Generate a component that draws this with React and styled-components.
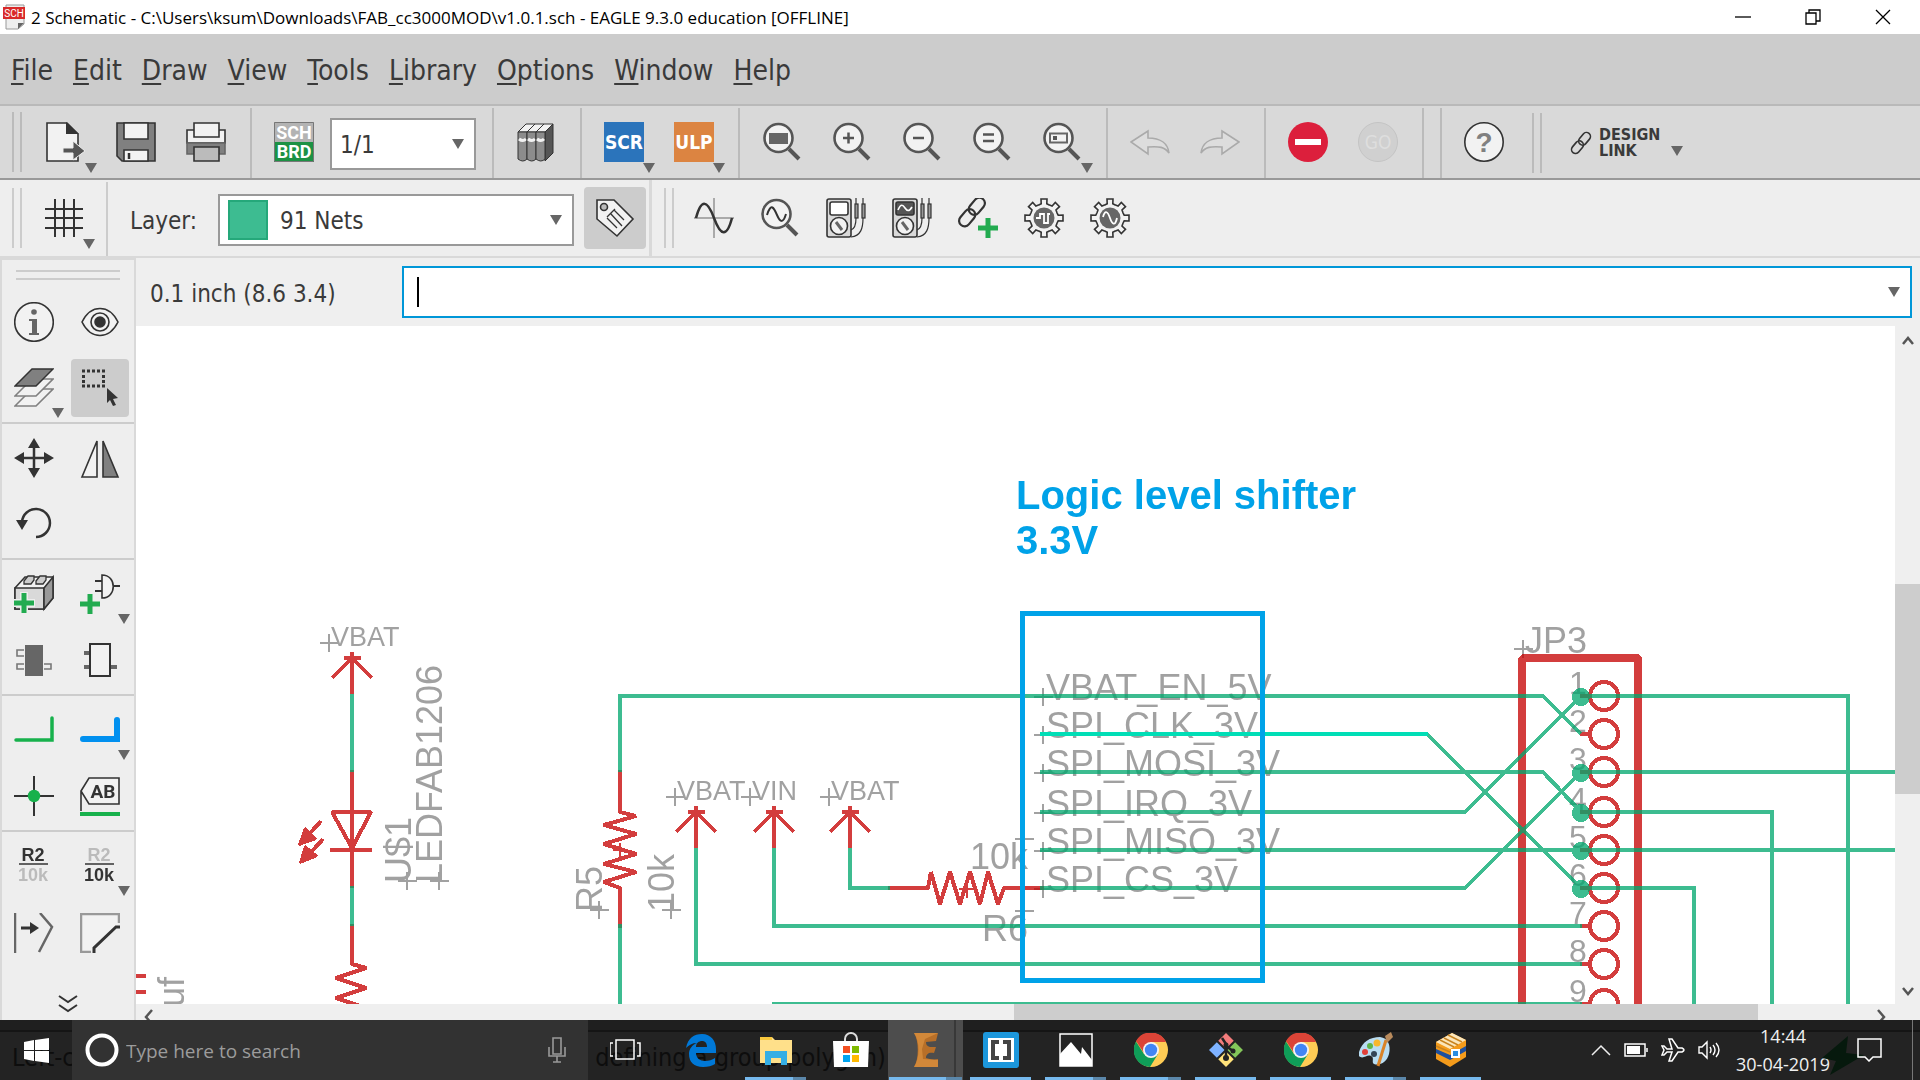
import React from 'react'
import styled, { createGlobalStyle } from 'styled-components'

const GlobalStyle = createGlobalStyle`
  * { box-sizing: border-box; }
  body {
    margin: 0;
    overflow: hidden;
    font-family: "DejaVu Sans Condensed", "DejaVu Sans", sans-serif;
    font-size: 24px;
    color: #3a3a3a;
  }
  button, input, select { font: inherit; color: inherit; }
  svg { display: block; }
`

const Window = styled.div`
  display: flex;
  flex-direction: column;
  height: 100vh;
  background: #eee;
`

const TitleBar = styled.header`
  display: flex;
  align-items: center;
  height: 34px;
  flex: none;
  padding: 0 2px 0 3px;
  background: #fff;
`

const Title = styled.h1`
  flex: 1;
  margin: 0 0 0 6px;
  font: 400 17px "Open Sans", sans-serif;
  color: #000;
  white-space: nowrap;
`

const WindowButton = styled.button`
  display: flex;
  align-items: center;
  justify-content: center;
  width: 70px;
  height: 34px;
  padding: 0;
  border: 0;
  background: none;
`

const MenuBar = styled.nav`
  display: flex;
  align-items: center;
  gap: 20px;
  height: 72px;
  flex: none;
  padding: 2px 11px 0;
  background: #ccc;
  border-bottom: 2px solid #b9b9b9;
`

const MenuItem = styled.button`
  padding: 0;
  border: 0;
  background: none;
  font-size: 28px;

  &::first-letter {
    text-decoration: underline;
    text-decoration-thickness: 2px;
    text-underline-offset: 3px;
  }
`

const MainBar = styled.div`
  display: flex;
  height: 74px;
  flex: none;
  background: #d9d9d9;
  border-bottom: 2px solid #999;
`

const SubBar = styled.div`
  display: flex;
  height: 78px;
  flex: none;
  background: #eee;
  border-bottom: 2px solid #d9d9d9;
`

const Group = styled.div`
  display: flex;
  align-items: center;
  gap: ${(props) => props.$gap || 10}px;
  margin-top: 2px;
  padding: 0 ${(props) => props.$end || 14}px 2px 12px;
  border-right: 2px solid ${(props) => props.$line || '#bbb'};
`

const Spacer = styled.div`
  width: 18px;
  margin-top: 2px;
  border-right: 2px solid #bbb;
`

const Grip = styled.div`
  width: 10px;
  height: 60px;
  margin-right: 4px;
  border: solid ${(props) => props.$line || '#bbb'};
  border-width: 0 2px;
`

const Tool = styled.button`
  position: relative;
  display: flex;
  align-items: center;
  justify-content: center;
  width: ${(props) => props.$size || 60}px;
  height: ${(props) => props.$size || 60}px;
  padding: 0;
  border: 0;
  border-radius: 4px;
  background: ${(props) => (props.$active ? '#ccc' : 'none')};
`

const Caret = styled.span`
  width: 0;
  height: 0;
  flex: none;
  border: solid transparent;
  border-width: 10px 6px 0;
  border-top-color: #666;
`

const ToolCaret = styled(Caret)`
  position: absolute;
  right: -1px;
  bottom: -1px;
`

const SelectBox = styled.div`
  display: flex;
  align-items: center;
  width: ${(props) => props.$width}px;
  height: 52px;
  margin-top: 4px;
  padding: 0 10px 0 8px;
  background: #fff;
  border: 2px solid #999;

  select {
    flex: 1;
    height: 100%;
    padding: 2px 0 0;
    border: 0;
    outline: 0;
    appearance: none;
    background: none;
  }
`

const Swatch = styled.span`
  width: 40px;
  height: 40px;
  margin-right: 12px;
  background: #3dbc91;
  border: 2px solid #25a87a;
`

const LayerGroup = styled.div`
  display: flex;
  align-items: center;
  padding: 0 3px 0 22px;
  border-right: 3px solid #d9d9d9;

  label {
    width: 88px;
    padding-top: 6px;
  }
  button { margin-left: 10px; }
`

const LinkGroup = styled.div`
  display: flex;
  align-items: center;
  gap: 24px;
  margin: 2px 0 0 2px;
`

const DesignLink = styled.button`
  display: flex;
  align-items: center;
  gap: 7px;
  padding: 0;
  border: 0;
  background: none;
  font: 700 16px/16px "DejaVu Sans Condensed", sans-serif;
  text-align: left;

  span:last-child { margin: 16px 0 0 4px; }
`

const Body = styled.div`
  display: flex;
  flex: 1;
  min-height: 0;
`

const Palette = styled.aside`
  width: 136px;
  flex: none;
  border: 2px solid #d9d9d9;
  border-bottom: 0;
  overflow: hidden;
`

const PaletteGrip = styled.div`
  height: 10px;
  margin: 10px 14px 8px;
  border: solid #ccc;
  border-width: 2px 0;
`

const PaletteGroup = styled.div`
  display: grid;
  grid-template-columns: 58px 58px;
  gap: 8px;
  height: 136px;
  padding: 5px 3px;
  border-bottom: 2px solid #ccc;

  &:last-of-type { border-bottom: 0; }
`

const MoreButton = styled.button`
  display: block;
  margin: 27px auto 0;
  padding: 0;
  border: 0;
  background: none;
`

const Editor = styled.main`
  display: grid;
  grid-template-columns: 1fr 25px;
  grid-template-rows: 68px 1fr 16px;
  flex: 1;
  min-width: 0;
`

const CommandRow = styled.div`
  grid-column: 1 / 3;
  display: flex;
  align-items: center;
  padding: 0 8px 0 14px;
  background: #efefef;
`

const Coords = styled.output`
  width: 252px;
  padding-top: 3px;
`

const CommandBox = styled.div`
  display: flex;
  align-items: center;
  flex: 1;
  height: 52px;
  padding: 0 10px 0 13px;
  background: #fff;
  border: 2px solid #0097d8;

  input {
    flex: 1;
    border: 0;
    outline: 0;
    background: none;
  }
`

const TextCursor = styled.span`
  width: 2px;
  height: 30px;
  background: #000;
`

const Sheet = styled.div`
  min-height: 0;
  overflow: hidden;
  background: #fff;

  svg { width: 100%; height: 100%; }
`

const VScroll = styled.div`
  display: grid;
  grid-template-rows: 258fr 210fr 210fr;
  justify-items: center;
  background: #efefef;
`

const HScroll = styled.div`
  grid-column: 1 / 3;
  display: grid;
  grid-template-columns: 878fr 744fr 162fr;
  background: #efefef;
`

const ScrollCell = styled.div`
  display: flex;
  flex-direction: ${(props) => (props.$row ? 'row' : 'column')};
  justify-content: ${(props) => (props.$end ? 'flex-end' : 'flex-start')};
  padding: ${(props) => (props.$row ? '5px 32px 0 7px' : '8px 0 6px')};
  overflow: hidden;
`

const Thumb = styled.div`
  width: 100%;
  background: #cdcdcd;
`

const Taskbar = styled.footer`
  position: relative;
  display: flex;
  height: 60px;
  flex: none;
  background: linear-gradient(#1f1f1f 10px, #151515 10px, #151515 12px, #232323 12px);
  font-family: "Open Sans", sans-serif;
`

const StatusText = styled.span`
  position: absolute;
  left: 12px;
  top: 24px;
  font: 25px/28px "DejaVu Sans Condensed", "DejaVu Sans", sans-serif;
  color: #0d0d0d;
  white-space: nowrap;
`

const StartButton = styled.button`
  position: relative;
  width: 72px;
  padding: 0 0 0 24px;
  border: 0;
  background: none;
`

const Search = styled.label`
  position: relative;
  display: flex;
  align-items: center;
  width: 516px;
  padding: 0 22px 0 13px;
  background: #323232;

  input {
    flex: 1;
    margin: 0 0 0 7px;
    padding: 2px 0 0;
    border: 0;
    outline: 0;
    background: none;
    font-size: 19px;
  }
  input::placeholder { color: #9c9c9c; opacity: 1; }
`

const Task = styled.button`
  position: relative;
  display: grid;
  grid-template-rows: 1fr 3px;
  justify-items: center;
  align-items: center;
  width: 75px;
  padding: 0;
  border: 0;
  background: ${(props) => (props.$active ? 'linear-gradient(90deg, #4d4d4d 66px, #383838 66px, #383838 68px, #4d4d4d 68px)' : 'none')};

  svg { margin-top: 3px; }
`

const Running = styled.span`
  width: ${(props) => (props.$wide ? 73 : 61)}px;
  height: 3px;
  background: ${(props) => (props.$many ? 'linear-gradient(90deg, #76b9ed 78%, #5b87aa 78%)' : '#76b9ed')};
`

const Tray = styled.div`
  position: relative;
  display: flex;
  align-items: center;
  gap: 13px;
  margin-left: auto;
  padding-right: 9px;
  border-right: 1px solid #777;
`

const Clock = styled.time`
  width: 98px;
  margin: 0 12px 0 0;
  font-size: 18px;
  line-height: 28px;
  color: #f0f0f0;
  text-align: center;
  white-space: nowrap;
`

const Bolt = styled.svg`
  position: absolute;
  right: 46px;
  top: 16px;
`

const ActionCenter = styled.svg`
  position: relative;
`

const Edge = styled.div`
  width: 7px;
`

const Icon = ({ children, size = 40 }) => (
  <svg width={size} height={size} viewBox="0 0 40 40" fill="none" stroke="#333" strokeWidth="1.6">{children}</svg>
)

const Lens = ({ children }) => (
  <Icon>
    <path d="M27 27l10 10" stroke="#555" strokeWidth="4" />
    <circle cx="16.500" cy="16" r="14" fill="#f2f2f2" stroke="#555" strokeWidth="2.600" />
    {children}
  </Icon>
)

const gearPath = () => {
  const pts = []
  for (let i = 0; i < 8; i++) {
    [[-22, 14], [-11, 14.5], [-9, 19.2], [9, 19.2], [11, 14.5], [22, 14]].forEach(([a, r]) => {
      const t = ((i * 45 + a) * Math.PI) / 180
      pts.push(`${(20 + r * Math.cos(t)).toFixed(1)},${(20 + r * Math.sin(t)).toFixed(1)}`)
    })
  }
  return pts.join(' ')
}

const Gear = ({ wave }) => (
  <Icon>
    <polygon points={gearPath()} fill="#f2f2f2" />
    <circle cx="20" cy="20" r="10.500" fill="#666" stroke="none" />
    <path d={wave} stroke="#fff" strokeWidth="1.800" />
  </Icon>
)

const Meter = ({ scope }) => (
  <Icon>
    <rect x="1" y="1" width="24" height="38" rx="2" fill="#d9d9d9" />
    <rect x="4" y="4" width="18" height="13" rx="2" fill={scope ? '#555' : '#fff'} />
    {scope && <path d="M6 12c3-7 5-5 7-2s4 4 7-1" stroke="#fff" />}
    <circle cx="13" cy="28" r="8.500" fill="#f2f2f2" />
    <path d="M10 24l6 8" strokeWidth="3" stroke="#666" />
    <path d="M30 0v7M37 0v7M30 20c0 7-2 11-5 12M37 20c0 10-2 18-12 19" strokeWidth="1.200" />
    <rect x="29" y="6" width="3" height="14" fill="#999" strokeWidth="1.200" />
    <rect x="36" y="6" width="3" height="14" fill="#999" strokeWidth="1.200" />
  </Icon>
)

const Plus = ({ x, y }) => (
  <path d={`M${x - 10} ${y}h20M${x} ${y - 10}v20`} stroke="#22ab50" strokeWidth="5" />
)

const chain = (
  <g transform="rotate(-50 14 14)" strokeWidth="2.200">
    <rect x="-3" y="8.500" width="19" height="11" rx="5.500" />
    <rect x="12" y="8.500" width="19" height="11" rx="5.500" />
  </g>
)

const icons = {
  open: (
    <Icon>
      <path d="M1 1h20l11 11v27H1z" fill="#f2f2f2" />
      <path d="M20 0l13 12H20z" fill="#333" stroke="none" />
      <path d="M17 26h10v-7l12 10-12 9v-7H17z" fill="#555" stroke="#eee" strokeWidth="1" />
    </Icon>
  ),
  save: (
    <Icon>
      <path d="M1 1h38v38H6l-5-5z" fill="#808080" />
      <path d="M8 1h24v16H8zM8 39V28h24v11z" fill="#f2f2f2" />
      <path d="M13 31v6" strokeWidth="2.500" />
    </Icon>
  ),
  print: (
    <Icon>
      <path d="M1 8h38v13H1z" fill="#f2f2f2" />
      <path d="M1 21h38v11H1z" fill="#808080" stroke="#666" />
      <path d="M8 1h25v14H8z" fill="#f2f2f2" />
      <path d="M8 25h25v14H8z" fill="#bbb" />
    </Icon>
  ),
  board: (
    <Icon>
      <path d="M0 0h40v20H0z" fill="#b3b3b3" stroke="none" />
      <path d="M0 20h40v20H0z" fill="#1c9144" stroke="none" />
      <path d="M.5 .5h39v39H.5z" stroke="#777" strokeWidth="1" />
      <g fill="#fff" stroke="none" fontSize="18" fontWeight="700" textAnchor="middle" fontFamily="Roboto">
        <text x="20" y="17">SCH</text>
        <text x="20" y="36">BRD</text>
      </g>
    </Icon>
  ),
  books: (
    <Icon>
      <path d="M29 10l8-8v29l-8 8z" fill="#555" strokeWidth="1" />
      {[2, 11, 20].map((x) => (
        <g key={x} strokeWidth="1">
          <path d={`M${x} 10l8-8h9l-8 8z`} fill="#f2f2f2" />
          <path d={`M${x} 10h9v27q-4 4-9 0z`} fill="#8c8c8c" />
          <path d={`M${x + 1} 17q4 3 7 0`} stroke="#f2f2f2" strokeWidth="3" />
        </g>
      ))}
    </Icon>
  ),
  scr: (
    <Icon>
      <path d="M0 0h40v40H0z" fill="#2b74bb" stroke="none" />
      <text x="20" y="27" fill="#fff" stroke="none" fontSize="19" fontWeight="700" textAnchor="middle" fontFamily="DejaVu Sans Condensed">SCR</text>
    </Icon>
  ),
  ulp: (
    <Icon>
      <path d="M0 0h40v40H0z" fill="#dc8441" stroke="none" />
      <text x="20" y="27" fill="#fff" stroke="none" fontSize="19" fontWeight="700" textAnchor="middle" fontFamily="DejaVu Sans Condensed">ULP</text>
    </Icon>
  ),
  zoomFit: <Lens><path d="M7 11h19v11H7z" fill="#666" stroke="none" /></Lens>,
  zoomIn: <Lens><path d="M11 16h11M16.500 10.500v11" stroke="#555" strokeWidth="2.500" /></Lens>,
  zoomOut: <Lens><path d="M11 16h11" stroke="#555" strokeWidth="2.500" /></Lens>,
  zoomRedraw: <Lens><path d="M11 12.500h11M11 19h11" stroke="#555" strokeWidth="2.500" /></Lens>,
  zoomSelect: (
    <Lens>
      <path d="M8 11.500h17v9H8z" stroke="#666" strokeWidth="2" />
      <path d="M11 14h4v4h-4z" fill="#555" stroke="none" />
    </Lens>
  ),
  undo: <Icon><path d="M1 20L18 9v7c13 0 20 6 21 15c-4-6-10-7-21-6v7z" fill="#ddd" stroke="#aaa" /></Icon>,
  redo: <Icon><path d="M39 20L22 9v7C9 16 2 22 1 31c4-6 10-7 21-6v7z" fill="#ddd" stroke="#aaa" /></Icon>,
  stop: (
    <Icon>
      <circle cx="20" cy="20" r="20" fill="#dc1f3c" stroke="none" />
      <path d="M7 17h26v6H7z" fill="#fff" stroke="none" />
    </Icon>
  ),
  go: (
    <Icon>
      <circle cx="20" cy="20" r="19.500" fill="#d0d0d0" stroke="#c4c4c4" strokeWidth="1" />
      <text x="20" y="27" fill="#dedede" stroke="none" fontSize="19" textAnchor="middle" fontFamily="DejaVu Sans Condensed">GO</text>
    </Icon>
  ),
  help: (
    <Icon>
      <circle cx="20" cy="20" r="19.200" fill="#f2f2f2" />
      <text x="20" y="30" fill="#808080" stroke="none" fontSize="28" fontWeight="700" textAnchor="middle" fontFamily="Liberation Sans">?</text>
    </Icon>
  ),
  grid: <Icon><path d="M1 11h38M1 20h38M1 30h38M11 1v38M20 1v38M30 1v38" strokeWidth="2" /></Icon>,
  tag: (
    <Icon>
      <path d="M2 2h17l19 19-16 17L2 21z" fill="#f2f2f2" />
      <circle cx="9" cy="9" r="3.500" fill="#bbb" />
      <path d="M12 19l8-8M19 12l10 10M16 16l11 12M12 20l10 10" strokeWidth="1.300" />
    </Icon>
  ),
  sine: (
    <Icon>
      <path d="M0 20h40M20 0v40" stroke="#aaa" strokeWidth="2" />
      <path d="M2 20c5-19 11-19 18 0s13 19 18 0" strokeWidth="2.500" />
    </Icon>
  ),
  probe: <Lens><path d="M7 17c4-13 7-7 10 0s6 9 9-1" strokeWidth="2" /></Lens>,
  meter: <Meter />,
  scope: <Meter scope />,
  link: <Icon>{chain}<Plus x={30} y={30} /></Icon>,
  gearDigital: <Gear wave="M12 20h4v-4h4v9h4v-9h2" />,
  gearSine: <Gear wave="M13 19c2-8 5-5 7 1s5 9 7 0" />,
  info: (
    <Icon>
      <circle cx="20" cy="20" r="19.300" fill="#f2f2f2" />
      <circle cx="20" cy="10" r="2.800" fill="#666" stroke="none" />
      <path d="M15 17h8v14h2v2H15v-2h3V19h-3z" fill="#666" stroke="none" />
    </Icon>
  ),
  eye: (
    <Icon>
      <path d="M2 20C11 2 29 2 38 20C29 38 11 38 2 20z" fill="#f2f2f2" />
      <circle cx="20" cy="20" r="9" />
      <circle cx="20" cy="20" r="5" fill="#333" />
    </Icon>
  ),
  layers: (
    <Icon>
      <path d="M1 38l17-17h21L22 38z" fill="#f2f2f2" stroke="#808080" />
      <path d="M1 28l17-17h21L22 28z" fill="#f2f2f2" stroke="#808080" />
      <path d="M1 18L18 1h21L22 18z" fill="#808080" strokeWidth="1.500" />
    </Icon>
  ),
  group: (
    <Icon>
      <path d="M2 3h23M2 18h23" strokeDasharray="3 2" strokeWidth="3" />
      <path d="M3.500 7v9M23.500 7v9" strokeDasharray="3 2" strokeWidth="3" />
      <path d="M27 20l11 10-5 1 3 6-3 1-3-6-3 3z" fill="#333" stroke="none" />
    </Icon>
  ),
  move: (
    <Icon>
      <path d="M8 20h24M20 8v24" strokeWidth="2.500" />
      <path d="M20 0l6 10H14zM20 40l6-10H14zM0 20l10-6v12zM40 20l-10-6v12z" fill="#333" stroke="none" />
    </Icon>
  ),
  mirror: (
    <Icon>
      <path d="M17 3v36H2z" fill="#f2f2f2" />
      <path d="M23 3v36h15z" fill="#808080" />
    </Icon>
  ),
  rotate: (
    <Icon>
      <path d="M8 18a14 14 0 1 1 14 15" strokeWidth="2.500" />
      <path d="M2 16h12l-6 10z" fill="#333" stroke="none" />
    </Icon>
  ),
  part: (
    <Icon>
      <path d="M1 14L11 3h28v21L30 35H1z" fill="#f2f2f2" />
      <path d="M1 14h29v21H1z" fill="#d9d9d9" />
      <path d="M30 14l9-11v21l-9 11z" fill="#999" />
      <path d="M10 7l4-5h6v4l-3 4h-7zM22 7l4-5h6v4l-3 4h-7z" fill="#ccc" strokeWidth="1.300" />
      <path d="M-1 29h22M10 18v22" stroke="#eee" strokeWidth="8" />
      <Plus x={10} y={29} />
    </Icon>
  ),
  gate: (
    <Icon>
      <path d="M15 7h7M15 17h7M34 12h6" strokeWidth="2" />
      <path d="M22 1v23c15 0 15-23 0-23z" fill="#f2f2f2" />
      <Plus x={10} y={30} />
    </Icon>
  ),
  chipFill: (
    <Icon>
      <path d="M10 10H3v6h7M10 24H3v5h7M30 24h7v5h-7" stroke="#777" />
      <path d="M11 5h18v31H11z" fill="#666" stroke="none" />
    </Icon>
  ),
  chip: (
    <Icon>
      <path d="M4 13h6M4 27h6M30 27h7" stroke="#666" strokeWidth="4" />
      <path d="M10 4h20v32H10z" fill="#f2f2f2" strokeWidth="2" />
    </Icon>
  ),
  net: <Icon><path d="M2 30h36V8" stroke="#17b14c" strokeWidth="3.500" strokeLinecap="round" /></Icon>,
  bus: <Icon><path d="M3 29h34V10" stroke="#0190ef" strokeWidth="6" strokeLinecap="round" /></Icon>,
  junction: (
    <Icon>
      <path d="M0 20h40M20 0v40" strokeWidth="2" />
      <circle cx="20" cy="20" r="6.200" fill="#17b14c" stroke="none" />
    </Icon>
  ),
  label: (
    <Icon>
      <path d="M1 15L9 2h30v26H9zM1 15v20" fill="#f2f2f2" />
      <path d="M0 38h40" stroke="#17b14c" strokeWidth="4" />
      <text x="23" y="22" fill="#333" stroke="none" fontSize="19" fontWeight="700" textAnchor="middle" fontFamily="Roboto">AB</text>
    </Icon>
  ),
  miter: (
    <Icon>
      <path d="M1 0v40" stroke="#666" strokeWidth="2.500" />
      <path d="M7 15h10" strokeWidth="3" />
      <path d="M16 9l9 6-9 6z" fill="#333" stroke="none" />
      <path d="M26 0l12 14-13 25" stroke="#666" strokeWidth="2.500" />
    </Icon>
  ),
  split: (
    <Icon>
      <path d="M39 10V1H1v38h10" fill="#f2f2f2" stroke="#999" strokeWidth="2.500" />
      <path d="M14 40v-5l22-21h4" strokeWidth="3" />
    </Icon>
  ),
}

const r2 = (top, bottom) => (
  <Icon>
    <g stroke="none" fontSize="18" fontWeight="700" textAnchor="middle" fontFamily="Liberation Sans">
      <text x="19" y="15" fill={top}>R2</text>
      <text x="19" y="35" fill={bottom}>10k</text>
    </g>
    <path d="M5 18h29" strokeWidth="1.500" />
  </Icon>
)
icons.name = r2('#333', '#bbb')
icons.value = r2('#bbb', '#333')

const ToolButton = ({ name, more, active, size }) => (
  <Tool type="button" aria-label={name} $active={active} $size={size}>
    {icons[name]}
    {more && <ToolCaret />}
  </Tool>
)

const Chevron = ({ d }) => (
  <svg width="14" height="14" fill="none" stroke="#555" strokeWidth="2.500"><path d={d} /></svg>
)

const menus = ['File', 'Edit', 'Draw', 'View', 'Tools', 'Library', 'Options', 'Window', 'Help']

const palette = [
  [['info'], ['eye'], ['layers', true], ['group', false, true]],
  [['move'], ['mirror'], ['rotate']],
  [['part'], ['gate', true], ['chipFill'], ['chip']],
  [['net'], ['bus', true], ['junction'], ['label']],
  [['name'], ['value', true], ['miter'], ['split']],
]

/* ---- schematic sheet ---- */

const PINS = [696, 734, 772, 812, 850, 888, 926, 964, 1004]

const signals = [
  ['VBAT_EN_5V', 697],
  ['SPI_CLK_3V', 735],
  ['SPI_MOSI_3V', 773],
  ['SPI_IRQ_3V', 813],
  ['SPI_MISO_3V', 851],
  ['SPI_CS_3V', 889],
]

const supplies = [
  ['VBAT', 352, 658, 329, 331],
  ['VBAT', 696, 812, 675, 677],
  ['VIN', 774, 812, 750, 752],
  ['VBAT', 850, 812, 829, 831],
]

const vertical = [
  ['U$1', 411, 883, 407],
  ['LEDFAB1206', 442, 883, 439],
  ['R5', 602, 912, 599],
  ['10k', 674, 912, 671],
]

const nets = [
  'M352 694v78M352 886v40M620 772V696H1543L1581 734M620 924v80',
  'M1427 734L1581 888H1694V1004',
  'M1040 772H1543L1581 812H1772V1004M1581 772H1895',
  'M1040 812H1465L1581 696H1848V1004',
  'M1040 850H1895',
  'M1040 888H1465L1581 772',
  'M696 848V964H1582M774 848V926H1582M850 848V888H890M772 1004H1582',
]

const Cross = ({ x, y }) => <path d={`M${x - 9} ${y}h19M${x} ${y - 9}v18`} />

const Schematic = () => (
  <svg viewBox="136 326 1759 678" preserveAspectRatio="xMinYMin slice" fill="none" shapeRendering="crispEdges">
    <g opacity=".76" stroke="#838383" strokeWidth="2">
      {supplies.map(([name, , y, cx]) => <Cross key={name + cx} x={cx} y={y - 15} />)}
      {vertical.map(([name, , y, cx]) => <Cross key={name} x={cx} y={y - 2} />)}
      {signals.map(([name, y]) => <Cross key={name} x={1043} y={y} />)}
      <Cross x={1024} y={839} />
      <Cross x={1024} y={911} />
      <Cross x={1523} y={649} />
      <g fill="#838383" stroke="none" fontFamily="Liberation Sans, sans-serif" fontSize="36">
        {supplies.map(([name, , y, , tx]) => <text key={name + tx} x={tx} y={y - 12} fontSize="27">{name}</text>)}
        {vertical.map(([name, x, y]) => <text key={name} transform={`translate(${x} ${y}) rotate(-90)`}>{name}</text>)}
        {signals.map(([name, y]) => <text key={name} x="1046" y={y + 3}>{name}</text>)}
        <text transform="translate(184 1007) rotate(-90)">uf</text>
        <text x="970" y="869">10k</text>
        <text x="982" y="941">R6</text>
        <text x="1525" y="653">JP3</text>
        {PINS.map((y, i) => <text key={y} x="1569" y={y - 2} fontSize="32">{i + 1}</text>)}
      </g>
    </g>

    <g opacity=".76" stroke="#c60000" strokeWidth="4" strokeLinejoin="bevel">
      {supplies.map(([name, x, y]) => (
        <path key={name + x} d={`M${x} ${y - 6}v42M${x - 8} ${y}h17M${x - 20} ${y + 20}l20-20l20 20`} />
      ))}
      <path d="M352 770V888M332 812h39l-19 36zM330 850h42" />
      <path d="M321 821l-18 20M323 839l-18 20" />
      <path d="M299 845l6-17 11 11zM300 863l5-17 12 10z" fill="#c60000" strokeWidth="2" />
      <path d="M352 924v40l14 4-30 10 30 10-30 10 24 8" />
      <path d="M620 770v42l16 4-32 9 32 9-32 10 32 10-32 10 32 8-32 10 16 6v40" />
      <path d="M613 850h14M620 843v14M959 889h16M967 884v14" strokeWidth="2" />
      <path d="M888 888h40l3-16 9 32 10-32 10 32 10-32 10 32 8-32 10 32 6-16h40" />
      <path d="M136 976h10M136 992h10" />
      <path d="M1522 1010V658h116v352" strokeWidth="8" />
      {PINS.map((y) => (
        <g key={y}>
          <path d={`M1580 ${y}h10`} />
          <circle cx="1604" cy={y} r="14" />
        </g>
      ))}
    </g>

    <g opacity=".76" stroke="#00a76e" strokeWidth="4">
      {nets.map((d) => <path key={d} d={d} />)}
      {[0, 2, 3, 4, 5].map((i) => <circle key={i} cx="1581" cy={PINS[i] + 1} r="9" fill="#00a76e" stroke="none" />)}
    </g>
    <path d="M1040 734h388" stroke="#00deb6" strokeWidth="4" />
    <path d="M1022.500 613.500h240v367h-240z" stroke="#00a2e8" strokeWidth="5" />
    <g fill="#00a2e8" fontFamily="Liberation Sans, sans-serif" fontSize="40" fontWeight="700">
      <text x="1016" y="509">Logic level shifter</text>
      <text x="1016" y="554">3.3V</text>
    </g>
  </svg>
)

/* ---- taskbar pictures ---- */

const Chrome = () => (
  <svg width="34" height="34" viewBox="0 0 34 34">
    <circle cx="17" cy="17" r="17" fill="#fc5" />
    <path d="M17 9h15a17 17 0 0 0-30-1l8 12z" fill="#db4437" />
    <path d="M2 8.500A17 17 0 0 0 16 34l8-13-14 0z" fill="#0f9d58" />
    <circle cx="17" cy="17" r="8" fill="#f4f4f4" />
    <circle cx="17" cy="17" r="6.200" fill="#4285f4" />
  </svg>
)

const tasks = [
  ['Task view', (
    <svg width="32" height="24" viewBox="1 0 32 24" fill="none" stroke="#fff" strokeWidth="1.500">
      <path d="M7 2h18v19H7zM4 5H1v13h3M28 5h3v13h-3" />
    </svg>
  )],
  ['Edge', (
    <svg width="32" height="34" viewBox="0 0 32 34">
      <path d="M1 15C3 5 9 1 17 1c9 0 14 7 14 15v4H11c0 5 4 8 9 8 4 0 7-1 10-3v6c-3 2-7 3-12 3C9 34 4 29 4 21c0-5 3-9 8-11-5 0-8 2-11 5zm10-1h11c0-4-2-6-5-6s-6 2-6 6z" fill="#0078d7" />
    </svg>
  )],
  ['File Explorer', (
    <svg width="34" height="30" viewBox="0 0 34 30">
      <path d="M1 2h12l3 3h17v23H1z" fill="#ffe08a" />
      <path d="M1 2h12v3H1z" fill="#f8c73d" />
      <path d="M6 30V16h22v14h-6v-7H12v7z" fill="#35aee4" />
    </svg>
  ), 'many'],
  ['Store', (
    <svg width="36" height="36" viewBox="0 0 36 36">
      <path d="M12 12V7a6 6 0 0 1 12 0v5" fill="none" stroke="#ddd" strokeWidth="2" />
      <path d="M0 9h36l-1 26H1z" fill="#fff" />
      <path d="M10 14h7v7h-7z" fill="#f25022" /><path d="M19 14h7v7h-7z" fill="#7fba00" />
      <path d="M10 23h7v7h-7z" fill="#00a4ef" /><path d="M19 23h7v7h-7z" fill="#ffb900" />
    </svg>
  )],
  ['EAGLE', (
    <svg width="26" height="36" viewBox="0 0 26 36">
      <path d="M1 1h24l-2 8-10 1c0 3 1 4 4 5h6l-2 6c-5-1-8 1-8 5 3 1 8 2 12 1v8H1c5-8 5-26 0-34z" fill="#b86f28" />
      <path d="M1 1h24l-13 6-3 10 1 10 15 1v7H1c6-9 6-26 0-34z" fill="#e29a45" opacity=".6" />
    </svg>
  ), 'many', true],
  ['Brackets', (
    <svg width="36" height="36" viewBox="0 0 36 36">
      <rect width="36" height="36" rx="3" fill="#1c97dc" />
      <path d="M5 6h26v24H5z" fill="#fff" />
      <path d="M8 8h8v4h-4v12h4v4H8zM28 8h-8v4h4v12h-4v4h8z" fill="#444" />
    </svg>
  ), 'one'],
  ['Photos', (
    <svg width="34" height="34" viewBox="0 0 34 34">
      <path d="M1 1h32v32H1z" fill="#232323" stroke="#fff" strokeWidth="1.500" />
      <path d="M1 33V21L12 9l10 12 1-7 10 13v6z" fill="#fff" />
    </svg>
  ), 'many'],
  ['Chrome', <Chrome />, 'many'],
  ['Git', (
    <svg width="36" height="36" viewBox="0 0 36 36">
      <g transform="rotate(45 18 18)">
        <path d="M6 6h11v11H6z" fill="#f47c7c" /><path d="M19 6h11v11H19z" fill="#84c65a" />
        <path d="M6 19h11v11H6z" fill="#7fb2ff" /><path d="M19 19h11v11H19z" fill="#ffe27a" />
      </g>
      <path d="M14 6l4 6v14M18 14l7 5" stroke="#232323" strokeWidth="2.500" fill="none" />
      <circle cx="18" cy="13" r="2.500" fill="#232323" /><circle cx="18" cy="26" r="3" fill="#232323" /><circle cx="25" cy="19" r="2.500" fill="#232323" />
    </svg>
  ), 'one'],
  ['Chrome window', <Chrome />, 'one'],
  ['Paint', (
    <svg width="36" height="36" viewBox="0 0 36 36">
      <path d="M1 20C4 10 12 5 22 5c8 1 11 8 9 17-2 8-9 12-15 10-3-2 1-6-3-8s-8 4-12 0z" fill="#b9ddf2" />
      <circle cx="7" cy="20" r="3" fill="#e2413a" /><circle cx="12" cy="14" r="3" fill="#5db548" />
      <circle cx="19" cy="11" r="3.500" fill="#f7b72c" /><circle cx="16" cy="22" r="3" fill="#345" />
      <path d="M28 8l-8 26" stroke="#d98328" strokeWidth="3" /><path d="M27 4l6-4 2 5-6 6z" fill="#b88a5c" />
    </svg>
  ), 'many'],
  ['Archive', (
    <svg width="32" height="34" viewBox="0 0 32 34">
      <path d="M1 9l16-9 14 7v17l-16 10L1 26z" fill="#f49b1b" />
      <path d="M1 9l16-9 14 7-16 9z" fill="#fbe6bb" />
      <path d="M5 7l14 7M9 5l14 7M13 2l14 7M1 13l14 6" stroke="#c98420" strokeWidth="1.500" />
      <path d="M1 16l14 6 16-9v5l-16 9-14-7z" fill="#1d4f9e" />
      <path d="M17 17h7v7h-7z" fill="#2b8de0" stroke="#fff" strokeWidth="2" />
    </svg>
  ), 'one'],
]

const App = () => (
  <>
    <GlobalStyle />
    <Window>
      <TitleBar>
        <svg width="22" height="26" viewBox="0 0 22 26">
          <path d="M3 1h18v19l-6 5H3z" fill="#eee" stroke="#999" />
          <path d="M15 25v-6h6z" fill="#666" />
          <path d="M0 3h22v12H0z" fill="#d92a2a" />
          <text x="11" y="13" fill="#fff" fontSize="10" textAnchor="middle" fontFamily="Roboto">SCH</text>
        </svg>
        <Title>2 Schematic - C:\Users\ksum\Downloads\FAB_cc3000MOD\v1.0.1.sch - EAGLE 9.3.0 education [OFFLINE]</Title>
        {[['Minimize', 'M0 8h16'], ['Restore', 'M1 4h10v11H1zM4 4V1h11v11h-4'], ['Close', 'M1 1l14 14M15 1L1 15']].map(([label, d]) => (
          <WindowButton key={label} type="button" aria-label={label}>
            <svg width="16" height="16" fill="none" stroke="#000" strokeWidth="1.300"><path d={d} /></svg>
          </WindowButton>
        ))}
      </TitleBar>

      <MenuBar>
        {menus.map((name) => <MenuItem key={name} type="button">{name}</MenuItem>)}
      </MenuBar>

      <MainBar>
        <Group>
          <Grip />
          <ToolButton name="open" more />
          <ToolButton name="save" />
          <ToolButton name="print" />
        </Group>
        <Group $gap={6} $end={16}>
          <ToolButton name="board" />
          <SelectBox $width={146}>
            <select aria-label="Sheet"><option>1/1</option></select>
            <Caret />
          </SelectBox>
        </Group>
        <Group><ToolButton name="books" /></Group>
        <Group>
          <ToolButton name="scr" more />
          <ToolButton name="ulp" more />
        </Group>
        <Group>
          <ToolButton name="zoomFit" />
          <ToolButton name="zoomIn" />
          <ToolButton name="zoomOut" />
          <ToolButton name="zoomRedraw" />
          <ToolButton name="zoomSelect" more />
        </Group>
        <Group>
          <ToolButton name="undo" />
          <ToolButton name="redo" />
        </Group>
        <Group>
          <ToolButton name="stop" />
          <ToolButton name="go" />
        </Group>
        <Spacer />
        <Group $line="transparent">
          <ToolButton name="help" />
        </Group>
        <LinkGroup>
          <Grip />
          <DesignLink type="button">
            <svg width="22" height="24" viewBox="-1 -1 30 30" fill="none" stroke="#333">{chain}</svg>
            <span>DESIGN<br />LINK</span>
            <Caret />
          </DesignLink>
        </LinkGroup>
      </MainBar>

      <SubBar>
        <Group $line="#ccc" $gap={8} $end={12}>
          <Grip $line="#ccc" />
          <ToolButton name="grid" more />
        </Group>
        <LayerGroup>
          <label htmlFor="layer">Layer:</label>
          <SelectBox $width={356}>
            <Swatch />
            <select id="layer"><option>91 Nets</option></select>
            <Caret />
          </SelectBox>
          <ToolButton name="tag" active size={62} />
        </LayerGroup>
        <Group $gap={6} $line="transparent">
          <Grip $line="#ccc" />
          <ToolButton name="sine" />
          <ToolButton name="probe" />
          <ToolButton name="meter" />
          <ToolButton name="scope" />
          <ToolButton name="link" />
          <ToolButton name="gearDigital" />
          <ToolButton name="gearSine" />
        </Group>
      </SubBar>

      <Body>
        <Palette>
          <PaletteGrip />
          {palette.map((group) => (
            <PaletteGroup key={group[0][0]}>
              {group.map(([name, more, active]) => (
                <ToolButton key={name} name={name} more={more} active={active} size={58} />
              ))}
            </PaletteGroup>
          ))}
          <MoreButton type="button" aria-label="More tools">
            <svg width="20" height="18" fill="none" stroke="#333" strokeWidth="2"><path d="M1 1l9 6 9-6M1 10l9 6 9-6" /></svg>
          </MoreButton>
        </Palette>

        <Editor>
          <CommandRow>
            <Coords>0.1 inch (8.6 3.4)</Coords>
            <CommandBox>
              <TextCursor />
              <input type="text" aria-label="Command line" />
              <Caret />
            </CommandBox>
          </CommandRow>
          <Sheet><Schematic /></Sheet>
          <VScroll>
            <ScrollCell><Chevron d="M2 10l5-6 5 6" /></ScrollCell>
            <Thumb />
            <ScrollCell $end><Chevron d="M2 4l5 6 5-6" /></ScrollCell>
          </VScroll>
          <HScroll>
            <ScrollCell $row><Chevron d="M9 1L3 8l6 7" /></ScrollCell>
            <Thumb />
            <ScrollCell $row $end><Chevron d="M4 1l6 7-6 7" /></ScrollCell>
          </HScroll>
        </Editor>
      </Body>

      <Taskbar>
        <StatusText>Left-click, drag to define group (or left-click to start defining a group polygon)</StatusText>
        <StartButton type="button" aria-label="Start">
          <svg width="25" height="25" viewBox="0 0 25 25" fill="#fff">
            <path d="M0 4l10-2v10H0zM11 2l14-2v12H11zM0 13h10v10L0 21zM11 13h14v12l-14-2z" />
          </svg>
        </StartButton>
        <Search>
          <svg width="34" height="34" fill="none" stroke="#fff" strokeWidth="4"><circle cx="17" cy="17" r="14.500" /></svg>
          <input type="search" placeholder="Type here to search" aria-label="Search" />
          <svg width="18" height="26" viewBox="0 0 18 26" fill="none" stroke="#999" strokeWidth="1.600">
            <path d="M5 1h8v16H5zM1 10v9h16v-9M9 19v6M5 25h8" />
          </svg>
        </Search>
        {tasks.map(([name, picture, running, active]) => (
          <Task key={name} type="button" aria-label={name} $active={active}>
            {picture}
            {running && <Running $many={running === 'many'} $wide={active} />}
          </Task>
        ))}
        <Tray>
          <svg width="20" height="12" fill="none" stroke="#eee" strokeWidth="1.500"><path d="M1 11l9-9 9 9" /></svg>
          <svg width="24" height="14" fill="none" stroke="#fff" strokeWidth="1.500">
            <path d="M1 1h20v12H1zM23 5v4" /><path d="M3 3h13v8H3z" fill="#fff" stroke="none" />
          </svg>
          <svg width="24" height="24" fill="none" stroke="#fff" strokeWidth="1.500">
            <path d="M1 8h2l3 3h5L8 1h3l6 9h4q4 2 0 4h-4l-6 9H8l3-9H6l-3 3H1l2-5z" />
          </svg>
          <svg width="23" height="20" fill="none" stroke="#fff" strokeWidth="1.400">
            <path d="M1 7h3l5-5v16l-5-5H1zM12 7q2 3 0 6M15 5q4 5 0 10M18 3q6 7 0 14" />
          </svg>
          <Bolt width="44" height="40"><path d="M26 0L0 22l14 3-6 14 34-20-18-2z" fill="#06190d" /></Bolt>
          <Clock>14:44<br />30-04-2019</Clock>
          <ActionCenter width="26" height="24" fill="none" stroke="#fff" strokeWidth="1.500">
            <path d="M1 1h23v18h-8l-4 4-4-4H1z" />
          </ActionCenter>
          <Edge />
        </Tray>
        <Edge />
      </Taskbar>
    </Window>
  </>
)

export default App
